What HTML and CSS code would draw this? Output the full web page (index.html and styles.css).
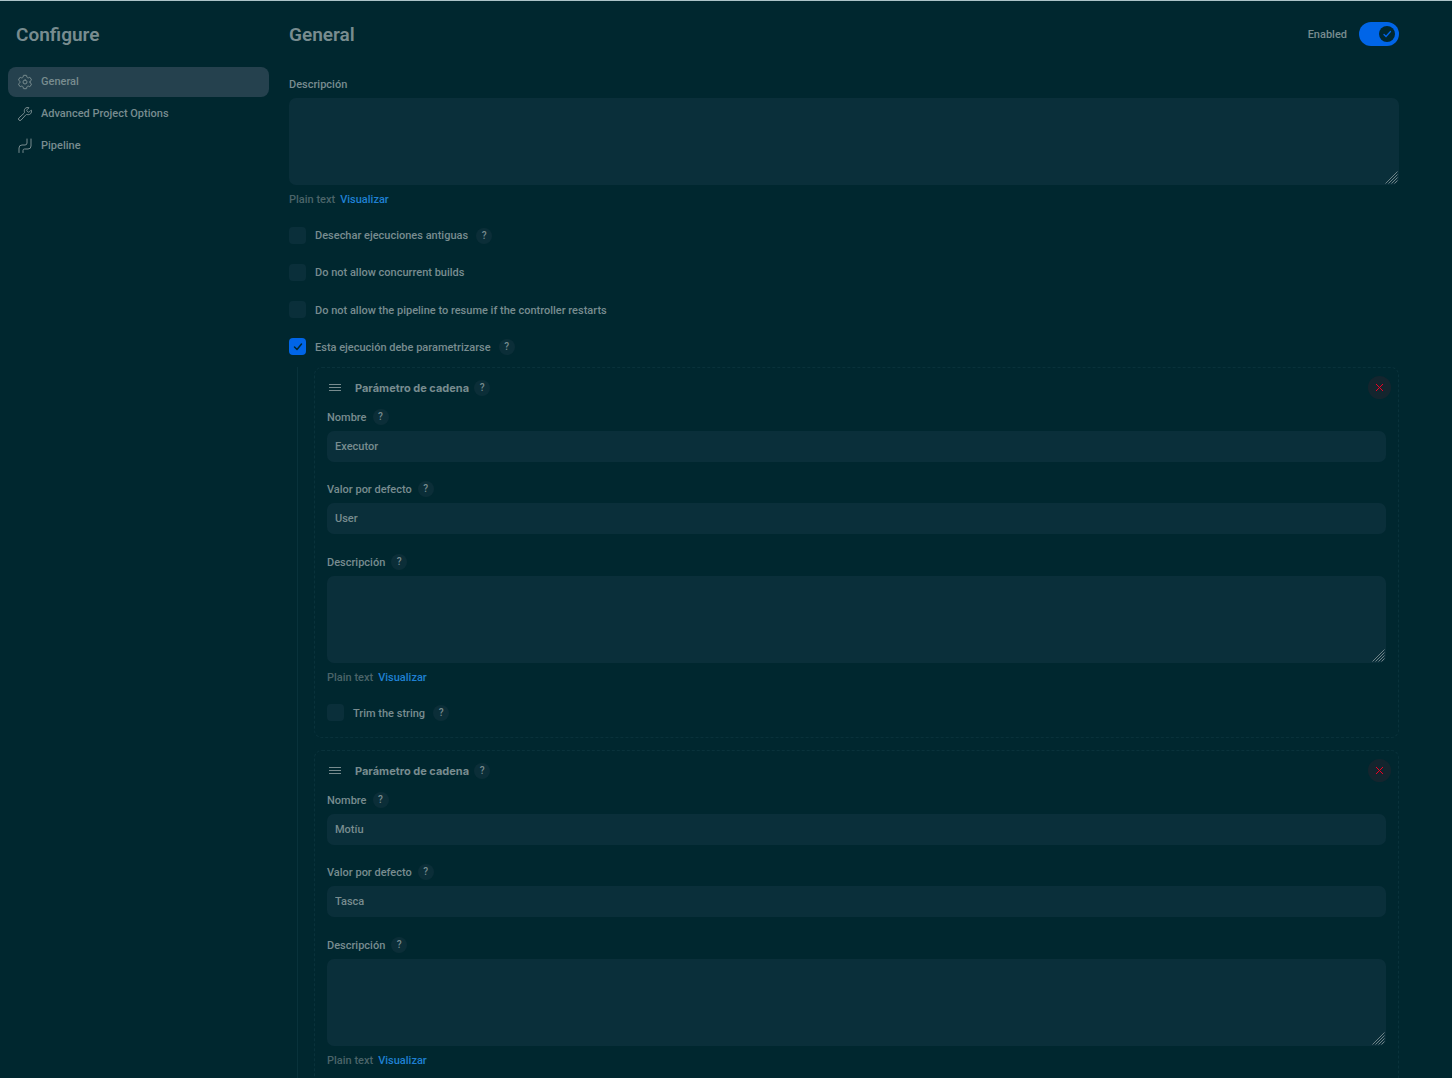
FILE: index.html
```html
<!DOCTYPE html>
<html lang="es">
<head>
<meta charset="utf-8">
<title>Configure</title>
<meta name="viewport" content="width=device-width, initial-scale=1">
<link rel="stylesheet" href="styles.css">
</head>
<body>
<svg class="sprite" aria-hidden="true">
  <symbol id="grip" viewBox="0 0 12 12"><path d="M0 2.500h12M0 5.500h12M0 8.500h12" fill="none" stroke="currentColor"/></symbol>
  <symbol id="close" viewBox="0 0 9 9"><path d="M1 1l7 7M8 1l-7 7" fill="none" stroke="currentColor"/></symbol>
  <symbol id="resize" viewBox="0 0 13 13"><path d="M.5 12.500l12-12M3.500 12.500l9-9M6.500 12.500l6-6M9.500 12.500l3-3" fill="none" stroke="currentColor" stroke-width=".9"/></symbol>
</svg>
<div class="app">
  <aside class="sidebar">
    <h1 class="heading sidebar-title">Configure</h1>
    <nav class="nav">
      <a class="nav-item active" href="#general">
        <svg class="nav-icon" viewBox="0 0 512 512"><path d="M262.290 192.310a64 64 0 1057.400 57.400 64.130 64.130 0 00-57.400-57.400zM416.390 256a154.340 154.340 0 01-1.530 20.790l45.210 35.460a10.810 10.810 0 012.450 13.750l-42.770 74a10.810 10.810 0 01-13.140 4.590l-44.900-18.080a16.110 16.110 0 00-15.170 1.750A164.480 164.480 0 01325 400.800a15.940 15.940 0 00-8.820 12.140l-6.730 47.890a11.080 11.080 0 01-10.680 9.170h-85.540a11.110 11.110 0 01-10.690-8.870l-6.720-47.820a16.070 16.070 0 00-9-12.220 155.300 155.300 0 01-21.460-12.570 16 16 0 00-15.110-1.710l-44.890 18.070a10.810 10.810 0 01-13.140-4.580l-42.770-74a10.800 10.800 0 012.450-13.750l38.210-30a16.050 16.050 0 006-14.080c-.36-4.170-.58-8.330-.58-12.500s.21-8.270.58-12.350a16 16 0 00-6.070-13.940l-38.190-30A10.810 10.810 0 0149.480 186l42.770-74a10.810 10.810 0 0113.140-4.590l44.900 18.080a16.110 16.110 0 0015.170-1.750A164.480 164.480 0 01187 111.200a15.940 15.940 0 008.820-12.140l6.730-47.890A11.080 11.080 0 01213.230 42h85.540a11.110 11.110 0 0110.690 8.870l6.720 47.820a16.070 16.070 0 009 12.220 155.300 155.300 0 0121.460 12.570 16 16 0 0015.110 1.710l44.890-18.070a10.810 10.810 0 0113.140 4.580l42.770 74a10.800 10.800 0 01-2.450 13.750l-38.210 30a16.050 16.050 0 00-6.050 14.080c.33 4.140.55 8.300.55 12.470z"/></svg>
        General
      </a>
      <a class="nav-item" href="#advanced">
        <svg class="nav-icon" viewBox="0 0 512 512"><path d="M393.870 190a32.100 32.100 0 01-45.250 0l-26.570-26.570a32.090 32.090 0 010-45.260L382.190 58a1 1 0 00-.3-1.640c-38.820-16.640-89.150-8.160-121.110 23.570-30.580 30.350-32.320 76-21.120 115.840a31.930 31.930 0 01-9.060 32.080L64 380a48.170 48.170 0 1068 68l153.860-167a31.930 31.930 0 0131.600-9.130c39.540 10.590 84.540 8.600 114.720-21.190 32.490-32 39.500-88.560 23.750-120.930a1 1 0 00-1.600-.26z"/></svg>
        Advanced Project Options
      </a>
      <a class="nav-item" href="#pipeline">
        <svg class="nav-icon pipe" viewBox="0 0 16 16"><path d="M2 14.500V10a3 3 0 013-3h3a2 2 0 002-2V1M6 14.500v-2A1.500 1.500 0 017.500 11H11a3 3 0 003-3V1"/></svg>
        Pipeline
      </a>
    </nav>
  </aside>

  <main class="main" id="general">
    <header class="main-head">
      <h2 class="heading">General</h2>
      <div class="enable">
        <label class="text" for="enabled">Enabled</label>
        <span class="switch">
          <input class="switch-input" id="enabled" type="checkbox" role="switch" checked>
          <svg class="switch-check" viewBox="0 0 16 16"><path d="M5 8.500l2 2 4.500-5"/></svg>
        </span>
      </div>
    </header>

    <div class="field">
      <div class="label"><label class="text" for="desc">Descripción</label></div>
      <div class="area"><textarea class="control textarea" id="desc"></textarea><svg class="handle"><use href="#resize"/></svg></div>
      <div class="label hint"><span class="text">Plain text</span><a class="text link" href="#preview">Visualizar</a></div>
    </div>

    <div class="options">
      <div class="option"><input class="box" type="checkbox" id="discard"><label for="discard">Desechar ejecuciones antiguas</label><button class="help" type="button">?</button></div>
      <div class="option"><input class="box" type="checkbox" id="concurrent"><label for="concurrent">Do not allow concurrent builds</label></div>
      <div class="option"><input class="box" type="checkbox" id="resume"><label class="text" for="resume">Do not allow the pipeline to resume if the controller restarts</label></div>
      <div class="option"><input class="box" type="checkbox" id="params" checked><label class="text" for="params">Esta ejecución debe parametrizarse</label><button class="help" type="button">?</button></div>
    </div>

    <div class="params">
      <section class="card">
        <header class="card-head">
          <svg class="grip"><use href="#grip"/></svg>
          <h3 class="card-title">Parámetro de cadena</h3>
          <button class="help" type="button">?</button>
          <button class="remove" type="button" aria-label="Eliminar"><svg class="remove-icon"><use href="#close"/></svg></button>
        </header>
        <div class="field">
          <div class="label"><label class="text" for="name1">Nombre</label><button class="help" type="button">?</button></div>
          <input class="control" id="name1" type="text" value="Executor">
        </div>
        <div class="field">
          <div class="label"><label class="text" for="value1">Valor por defecto</label><button class="help" type="button">?</button></div>
          <input class="control" id="value1" type="text" value="User">
        </div>
        <div class="field field-long">
          <div class="label"><label class="text" for="desc1">Descripción</label><button class="help" type="button">?</button></div>
          <div class="area"><textarea class="control textarea" id="desc1"></textarea><svg class="handle"><use href="#resize"/></svg></div>
          <div class="label hint"><span class="text">Plain text</span><a class="text link" href="#preview1">Visualizar</a></div>
        </div>
        <div class="option"><input class="box" type="checkbox" id="trim1"><label class="text" for="trim1">Trim the string</label><button class="help" type="button">?</button></div>
      </section>

      <section class="card">
        <header class="card-head">
          <svg class="grip"><use href="#grip"/></svg>
          <h3 class="card-title">Parámetro de cadena</h3>
          <button class="help" type="button">?</button>
          <button class="remove" type="button" aria-label="Eliminar"><svg class="remove-icon"><use href="#close"/></svg></button>
        </header>
        <div class="field">
          <div class="label"><label class="text" for="name2">Nombre</label><button class="help" type="button">?</button></div>
          <input class="control" id="name2" type="text" value="Motíu">
        </div>
        <div class="field">
          <div class="label"><label class="text" for="value2">Valor por defecto</label><button class="help" type="button">?</button></div>
          <input class="control" id="value2" type="text" value="Tasca">
        </div>
        <div class="field field-long">
          <div class="label"><label class="text" for="desc2">Descripción</label><button class="help" type="button">?</button></div>
          <div class="area"><textarea class="control textarea" id="desc2"></textarea><svg class="handle"><use href="#resize"/></svg></div>
          <div class="label hint"><span class="text">Plain text</span><a class="text link" href="#preview2">Visualizar</a></div>
        </div>
      </section>
    </div>
  </main>
</div>
</body>
</html>
```
FILE: styles.css
```css
:root {
  --bg: #00272f;
  --field: #0a2f3a;
  --line: #09323b;
  --text: #788c8f;
  --muted: #4b6469;
  --accent: #0065e8;
  --link: #1f80d3;
}

* { box-sizing: border-box; }

body {
  margin: 0;
  background: var(--bg);
  color: var(--text);
  font: 500 11px/16px Roboto, "Liberation Sans", sans-serif;
}

button, input, textarea { font: inherit; color: inherit; margin: 0; }

.sprite { position: absolute; width: 0; height: 0; }

.app {
  display: grid;
  grid-template-columns: 261px minmax(0, 1fr);
  gap: 20px;
  height: 100vh;
  overflow: hidden;
  padding: 21px 53px 0 8px;
  border-top: 1px solid #adc3c8;
}

.heading {
  margin: 0;
  padding-top: 1px;
  font-size: 19px;
  line-height: 24px;
  font-weight: 600;
}

.sidebar-title { padding-left: 8px; margin-bottom: 20px; }

.nav { display: flex; flex-direction: column; gap: 2px; }

.nav-item {
  display: flex;
  align-items: center;
  gap: 8px;
  height: 30px;
  padding: 0 9px;
  border-radius: 8px;
  color: inherit;
  text-decoration: none;
}

.nav-item.active { background: #25414e; }

.nav-icon {
  width: 16px;
  height: 16px;
  fill: none;
  stroke: currentColor;
  stroke-width: 32;
  stroke-linecap: round;
  stroke-linejoin: round;
}

.nav-icon.pipe { stroke-width: 1; }

.main-head {
  display: flex;
  justify-content: space-between;
  height: 24px;
  margin-bottom: 30px;
}

.enable { display: flex; align-items: center; gap: 12px; }

.switch { display: grid; }

.switch > * { grid-area: 1 / 1; }

.switch-input {
  appearance: none;
  width: 40px;
  height: 24px;
  border-radius: 12px;
  background: var(--accent);
}

.switch-check {
  width: 16px;
  height: 16px;
  margin-right: 4px;
  justify-self: end;
  align-self: center;
  border-radius: 50%;
  background: var(--bg);
  fill: none;
  stroke: var(--accent);
  stroke-width: 1.3;
  stroke-linecap: round;
  pointer-events: none;
}

.field { display: flex; flex-direction: column; gap: 6px; }

.field-long { padding-top: 1px; }

.label { display: flex; align-items: center; gap: 6px; height: 16px; }

.text { padding-top: 2px; }

.hint { gap: 5px; color: var(--muted); }

.link { color: var(--link); text-decoration: none; }

.control {
  display: block;
  width: 100%;
  height: 31px;
  padding: 0 8px;
  border: 0;
  border-radius: 7px;
  background: var(--field);
  outline: none;
}

.textarea { height: 87px; padding: 8px; resize: none; }

.area { position: relative; }

.handle {
  position: absolute;
  right: 1px;
  bottom: 1px;
  width: 13px;
  height: 13px;
}

.options {
  display: flex;
  flex-direction: column;
  gap: 20px;
  margin: 20px 0 12px;
}

.option { display: flex; align-items: center; gap: 9px; height: 17px; }

.option .help { margin-left: -1px; }

.box {
  appearance: none;
  width: 17px;
  height: 17px;
  border-radius: 4px;
  background: var(--field);
}

.box:checked {
  background: var(--accent) url("data:image/svg+xml,%3Csvg xmlns='http://www.w3.org/2000/svg' viewBox='0 0 17 17'%3E%3Cpath d='M5.500 9l2.500 2.500 4.500-5.500' fill='none' stroke='%2300272f' stroke-width='1.500' stroke-linecap='round' stroke-linejoin='round'/%3E%3C/svg%3E");
}

.help {
  width: 16px;
  height: 16px;
  padding: 0;
  border: 0;
  border-radius: 50%;
  background: #0b2e38;
  font-size: 10px;
  line-height: 16px;
}

.params {
  display: flex;
  flex-direction: column;
  gap: 12px;
  margin-left: 8px;
  padding-left: 16px;
  border-left: 1px solid var(--line);
}

.card {
  display: flex;
  flex-direction: column;
  gap: 19px;
  padding: 8px 12px 16px;
  border: 1px dashed var(--line);
  border-radius: 8px;
}

.card:last-child { padding-bottom: 60px; }

.card-head {
  display: flex;
  align-items: center;
  gap: 5px;
  height: 23px;
  margin: 0 -5px -9px 0;
}

.grip { width: 12px; height: 12px; margin: 0 9px 0 2px; }

.card-title {
  margin: 0;
  font: 700 11px/16px Inter, "Liberation Sans", sans-serif;
}

.remove {
  display: grid;
  place-items: center;
  width: 23px;
  height: 23px;
  margin-left: auto;
  padding: 0;
  border: 0;
  border-radius: 50%;
  background: #14252e;
  color: #f00023;
}

.remove-icon { width: 9px; height: 9px; }
```
